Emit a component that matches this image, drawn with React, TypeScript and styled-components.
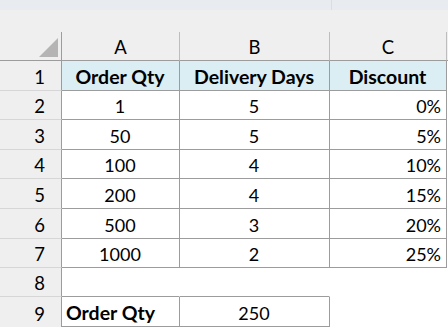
import styled, { createGlobalStyle } from 'styled-components'

const GlobalStyle = createGlobalStyle`
  html, body {
    margin: 0;
    padding: 0;
    background: #ffffff;
  }
  body {
    font-family: Lato, 'Liberation Sans', sans-serif;
    color: #000;
  }
`

const GRID = '#9c9c9c'
const HEAD_BG = '#efefef'

const Page = styled.div`
  width: 448px;
  height: 328px;
  overflow: hidden;
  display: flex;
  flex-direction: column;
`

const TopBand = styled.div`
  height: 10px;
  background: #e8ecf0;
  display: flex;
`

const BandPart = styled.div<{ $w?: number }>`
  width: ${(p) => (p.$w ? `${p.$w}px` : 'auto')};
  flex: ${(p) => (p.$w ? 'none' : '1')};
  border-right: ${(p) => (p.$w ? '1px solid #d9dee3' : 'none')};
`

const Spacer = styled.div`
  height: 22px;
  background: ${HEAD_BG};
`

const Sheet = styled.div`
  display: grid;
  grid-template-columns: 62px 118px 150px 117px 1fr;
  grid-template-rows: 29px 30px 29px 30px 29px 30px 30px 29px 29px 30px;
  font-size: 18px;
  line-height: 18px;
`

const Corner = styled.div`
  background: ${HEAD_BG};
  border-right: 1px solid ${GRID};
  border-bottom: 1px solid ${GRID};
  display: flex;
  justify-content: flex-end;
  align-items: flex-end;
  padding: 0 3px 3px 0;
`

const SelectAll = styled.div`
  width: 19px;
  height: 19px;
  background: #b4b4b4;
  clip-path: polygon(100% 0, 100% 100%, 0 100%);
`

const ColHead = styled.div<{ $last?: boolean }>`
  background: ${HEAD_BG};
  border-right: ${(p) => (p.$last ? 'none' : '1px solid #bdbdbd')};
  border-bottom: 1px solid ${GRID};
  display: flex;
  justify-content: center;
  align-items: flex-end;
  padding-bottom: 4px;
  font-size: 18.5px;
`

const RowHead = styled.div<{ $last?: boolean }>`
  background: ${HEAD_BG};
  border-right: 1px solid ${GRID};
  border-bottom: ${(p) => (p.$last ? 'none' : '1px solid #d6d6d6')};
  display: flex;
  justify-content: flex-end;
  align-items: flex-end;
  padding: 0 16px 4px 0;
  font-size: 18.5px;
`

type Align = 'left' | 'center' | 'right'

const Cell = styled.div<{
  $align?: Align
  $bold?: boolean
  $fill?: boolean
  $right?: boolean
  $bottom?: boolean
}>`
  background: ${(p) => (p.$fill ? '#daeef3' : '#ffffff')};
  border-right: ${(p) => (p.$right ? `1px solid ${GRID}` : '1px solid transparent')};
  border-bottom: ${(p) => (p.$bottom ? `1px solid ${GRID}` : '1px solid transparent')};
  font-weight: ${(p) => (p.$bold ? 700 : 400)};
  font-size: ${(p) => (p.$bold ? '19.5px' : '18px')};
  display: flex;
  align-items: flex-end;
  justify-content: ${(p) =>
    p.$align === 'left' ? 'flex-start' : p.$align === 'right' ? 'flex-end' : 'center'};
  padding: 0 5px 4px 4px;
  white-space: nowrap;
`

const data = [
  [1, 5, '0%'],
  [50, 5, '5%'],
  [100, 4, '10%'],
  [200, 4, '15%'],
  [500, 3, '20%'],
  [1000, 2, '25%'],
]

const App: React.FC = () => {
  return (
    <Page>
      <GlobalStyle />
      <TopBand>
        <BandPart $w={331} />
        <BandPart />
      </TopBand>
      <Spacer />
      <Sheet>
        <Corner>
          <SelectAll />
        </Corner>
        <ColHead>A</ColHead>
        <ColHead>B</ColHead>
        <ColHead>C</ColHead>
        <ColHead $last />

        <RowHead>1</RowHead>
        <Cell $fill $bold $right $bottom>Order Qty</Cell>
        <Cell $fill $bold $right $bottom>Delivery Days</Cell>
        <Cell $fill $bold $right $bottom>Discount</Cell>
        <Cell />

        {data.map(([qty, days, discount], i) => (
          <Row key={i} n={i + 2} qty={qty} days={days} discount={discount} />
        ))}

        <RowHead>8</RowHead>
        <Cell $bottom />
        <Cell $bottom />
        <Cell />
        <Cell />

        <RowHead $last>9</RowHead>
        <Cell $align="left" $bold $right $bottom>Order Qty</Cell>
        <Cell $right $bottom>250</Cell>
        <Cell />
        <Cell />
      </Sheet>
    </Page>
  )
}

const Row: React.FC<{
  n: number
  qty: string | number
  days: string | number
  discount: string | number
}> = ({ n, qty, days, discount }) => (
  <>
    <RowHead>{n}</RowHead>
    <Cell $right $bottom>{qty}</Cell>
    <Cell $right $bottom>{days}</Cell>
    <Cell $align="right" $right $bottom>{discount}</Cell>
    <Cell />
  </>
)

export default App
